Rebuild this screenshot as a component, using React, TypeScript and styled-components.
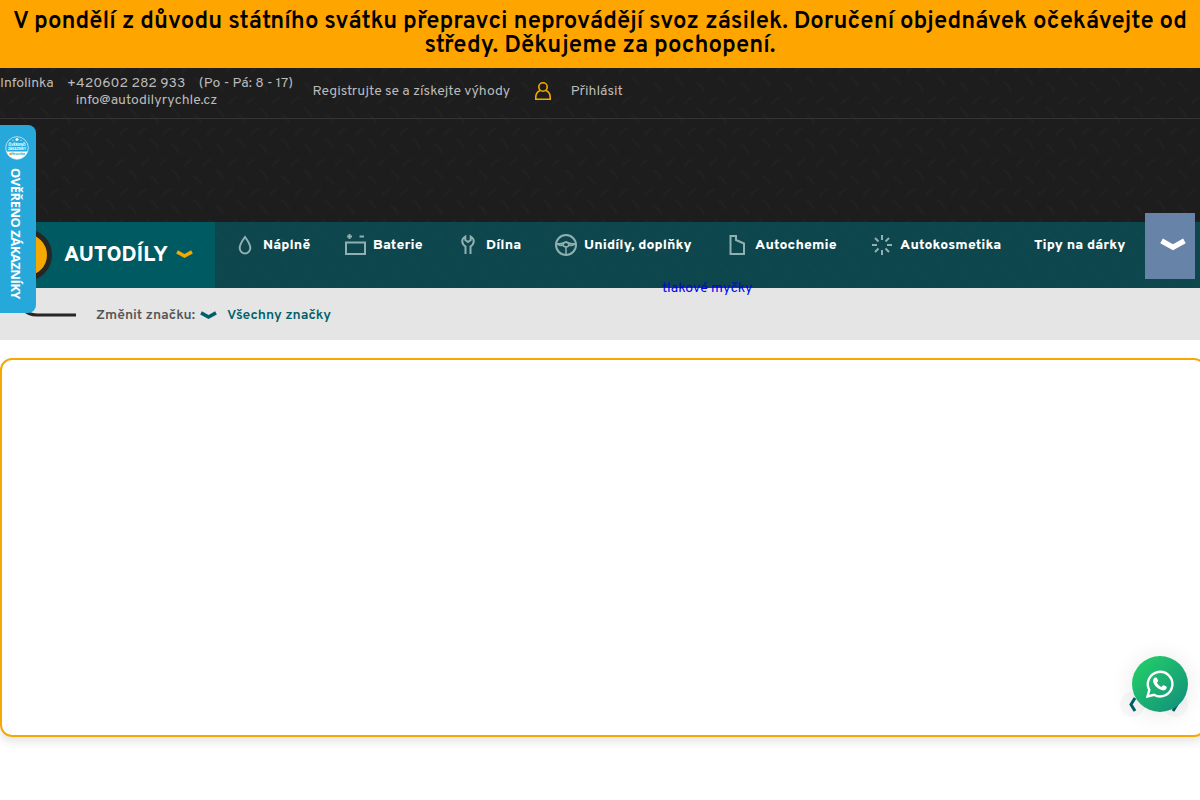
import type { ReactNode } from 'react';
import styled, { createGlobalStyle } from 'styled-components';

const treadPlate = (opacity: number) => `url("data:image/svg+xml,%3Csvg xmlns='http://www.w3.org/2000/svg' width='43.75' height='61.5' viewBox='0 0 43.75 61.5'%3E%3Cg fill='none' stroke='%23fff' stroke-opacity='${opacity}' stroke-width='2.2'%3E%3Cpath d='M1 15q3-5 8-7M19.300 15q3-5 8-7M-3 46q3-5 8-7M40.700 46q3-5 8-7M22.300 46q3-5 8-7M31 19q5 3 8 9M9.300 24q5 3 8 9M9.300 49.500q5 3 8 9M31 55.500q5 3 8 9M31-6q5 3 8 9'/%3E%3C/g%3E%3C/svg%3E")`;

const GlobalStyle = createGlobalStyle`
  * {
    box-sizing: border-box;
  }

  html, body {
    height: 800px;
    overflow: hidden;
  }

  body {
    margin: 0;
    background: #fff;
    font-family: Overpass, Roboto, "Noto Sans", sans-serif;
    font-size: 14px;
  }
`;

const Page = styled.div`
  position: relative;
  width: 1200px;
  height: 800px;
  overflow: hidden;
`;

const Notice = styled.div`
  height: 68px;
  padding: 10px;
  background: #ffa500;
  color: #000;
  font-size: 24px;
  font-weight: 600;
  line-height: 24px;
  text-align: center;
`;

const Header = styled.header`
  height: 154px;
  background: #1d1d1d ${treadPlate(0.016)} 31.25px 52px;
  color: #bbb;
`;

const TopBar = styled.div`
  display: flex;
  height: 51px;
  border-bottom: 1px solid #353334;
  white-space: nowrap;
`;

const Contact = styled.div`
  width: 293px;
  padding-top: 7px;
  line-height: 17px;
`;

const Phone = styled.div`
  display: flex;
  justify-content: space-between;
`;

const Mail = styled.div`
  text-align: center;
`;

const UserLink = styled.a<{ $gap: number }>`
  margin-left: ${({ $gap }) => $gap}px;
  line-height: 47px;
`;

const UserIcon = styled.svg`
  margin: 14px 0 0 24px;
  fill: none;
  stroke: #f5a800;
  stroke-width: 1.6;
`;

const Nav = styled.nav`
  display: flex;
  height: 66px;
  background: #0d464c ${treadPlate(0.008)} 31.25px 21px;
  white-space: nowrap;
`;

const PartsButton = styled.div`
  display: flex;
  align-items: center;
  width: 215px;
  height: 66px;
  background: #005a61;
  color: #fff;
`;

const PartsBadge = styled.div`
  width: 52px;
  height: 52px;
  border: 5px solid #262626;
  border-radius: 50%;
  background: #f5a800;
`;

const PartsLabel = styled.span`
  width: 112px;
  margin-left: 12px;
  font-size: 21px;
  font-weight: 800;
  letter-spacing: 0.15px;
`;

const NavList = styled.div`
  display: flex;
  flex: 1;
  padding: 10px 0 0 17px;
`;

const NavItem = styled.a<{ $width: number }>`
  display: flex;
  align-items: center;
  width: ${({ $width }) => $width}px;
  height: 26px;
  color: #fff;
  font-weight: 800;
  letter-spacing: 0.1px;

  svg {
    flex: none;
    margin-right: 5px;
    fill: none;
    stroke: #91b0b1;
    stroke-width: 2;
  }
`;

const MoreButton = styled.div`
  position: absolute;
  top: 213px;
  right: 5px;
  display: flex;
  align-items: center;
  justify-content: center;
  width: 50px;
  height: 66px;
  padding: 0 0 2px 5px;
  background: #6883a8;
`;

const StrayLink = styled.a`
  position: absolute;
  top: 280px;
  left: 662px;
  color: #0000ee;
  line-height: 17px;
  letter-spacing: 0.05px;
`;

const BrandBar = styled.div`
  display: flex;
  align-items: center;
  height: 52px;
  padding-left: 20px;
  background: #e5e5e5;
  font-weight: 600;
  white-space: nowrap;
`;

const BrandLabel = styled.span`
  width: 104px;
  margin-left: 20px;
  padding-top: 2px;
  color: #555;
  letter-spacing: -0.05px;
`;

const BrandLink = styled.a`
  margin-left: 10px;
  padding-top: 2px;
  color: #005f68;
  letter-spacing: -0.05px;
`;

const BrandChevron = styled.div`
  display: flex;
  padding-top: 3px;
`;

const Banner = styled.section`
  width: 1206px;
  height: 379px;
  margin-top: 18px;
  border: 2px solid #f5a800;
  border-radius: 12px;
  box-shadow: 0 5px 10px rgba(0, 0, 0, 0.1);
`;

const Arrows = styled.div`
  position: absolute;
  top: 692px;
  left: 1120px;
  display: flex;
  gap: 18px;
`;

const Arrow = styled.div`
  display: flex;
  align-items: center;
  justify-content: center;
  width: 25px;
  height: 25px;
  border-radius: 50%;
  background: #f8f8f8;
`;

const ChatButton = styled.div`
  position: absolute;
  top: 656px;
  right: 12px;
  display: flex;
  align-items: center;
  justify-content: center;
  width: 56px;
  height: 56px;
  border-radius: 50%;
  background: linear-gradient(135deg, #25d366, #128c7e);
  box-shadow: 0 2px 24px rgba(0, 0, 0, 0.1);
`;

const Verified = styled.aside`
  position: absolute;
  top: 125px;
  left: 0;
  display: flex;
  flex-direction: column;
  align-items: center;
  width: 36px;
  height: 188px;
  padding: 11px 2px 0 0;
  border-radius: 0 8px 8px 0;
  background: #26a9da;
`;

const VerifiedText = styled.span`
  margin-top: 8px;
  padding-right: 2px;
  color: #fff;
  font-family: "Open Sans", sans-serif;
  font-size: 13px;
  font-weight: 700;
  line-height: 16px;
  letter-spacing: -0.5px;
  white-space: nowrap;
  writing-mode: vertical-rl;
`;

interface ChevronProps {
  color: string;
  width?: number;
}

const Chevron = ({ color, width = 18 }: ChevronProps) => (
  <svg width={width} height={width * 0.55} viewBox="0 0 18 10">
    <path d="M1 2 9 6.500 17 2" fill="none" stroke={color} strokeWidth="3.700" />
  </svg>
);

const icon = (children: ReactNode) => (
  <svg width="26" height="26" viewBox="0 0 26 26">{children}</svg>
);

const navItems = [
  {
    label: 'Náplně', width: 110,
    icon: icon(<path d="M13 5Q7.700 12 7.700 16a5.300 5.500 0 0 0 10.600 0Q18.300 12 13 5Z" />),
  },
  {
    label: 'Baterie', width: 113,
    icon: icon(<path d="M4 10.500h19V22H4ZM7.500 2v5M5 4.500h5M17.500 4.500h4.500" />),
  },
  {
    label: 'Dílna', width: 98,
    icon: icon(<path d="M10.500 22v-7.500Q7.200 12 7.200 9.200 7.200 6.300 10.300 4.500V8l2.700 2 2.700-2V4.500Q18.800 6.300 18.800 9.200 18.800 12 15.500 14.500V22" />),
  },
  {
    label: 'Unidíly, doplňky', width: 171,
    icon: icon(<>
      <circle cx="13" cy="13" r="10" />
      <ellipse cx="13" cy="12.500" rx="3" ry="2.300" strokeWidth="1.600" />
      <path d="M3.500 11.500Q8 12.500 13 10q5 2.500 9.500 1.500M9.800 13Q7 14.500 4 12M16.200 13q2.800 1.500 5.800-1M13 15v8" strokeWidth="1.500" />
    </>),
  },
  {
    label: 'Autochemie', width: 145,
    icon: icon(<path d="M6.500 4H12v4l8 3.500V22H6.500Z" />),
  },
  {
    label: 'Autokosmetika', width: 165,
    icon: icon(<path d="M13 3v5M13 18v5M3 13h5M18 13h5M6 6l3.500 3.500M16.500 16.500 20 20M20 6l-3.500 3.500M9.500 16.500 6 20" />),
  },
  { label: 'Tipy na dárky', width: 100, icon: null },
];

const VerifiedSeal = () => (
  <svg width="24" height="24" viewBox="0 0 24 24">
    <circle cx="12" cy="12" r="11.300" fill="none" stroke="#b5e0f1" />
    <path d="M1.500 15.500h21A11 11 0 0 1 1.500 15.500Z" fill="#fff" />
    <path d="M12 2v3M10.500 3.500h3" stroke="#fff" strokeWidth="1.300" />
    <path d="M4.500 6.500h1M7.500 4.300h1M15.500 4.300h1M18.500 6.500h1" stroke="#fff" />
    <g fill="#fff" fontFamily="Open Sans, sans-serif" fontWeight="700" fontSize="3.6" textAnchor="middle">
      <text x="12" y="10.300">OVĚŘENO</text>
      <text x="12" y="14.200" fontSize="3.2">ZÁKAZNÍKY</text>
      <text x="13" y="19.300" fontSize="3.2" fill="#26a9da">Heureka</text>
    </g>
    <circle cx="5.500" cy="18" r="1.200" fill="#f7941e" />
  </svg>
);

export default function App() {
  return (
    <Page>
      <GlobalStyle />
      <Notice>
        V pondělí z důvodu státního svátku přepravci neprovádějí svoz zásilek. Doručení objednávek očekávejte od
        středy. Děkujeme za pochopení.
      </Notice>

      <Header>
        <TopBar>
          <Contact>
            <Phone>
              <span>Infolinka</span>
              <span>+420602 282 933</span>
              <span>(Po - Pá: 8 - 17)</span>
            </Phone>
            <Mail>info@autodilyrychle.cz</Mail>
          </Contact>
          <UserLink $gap={19.5}>Registrujte se a získejte výhody</UserLink>
          <UserIcon width="18" height="19" viewBox="0 0 18 19">
            <circle cx="9" cy="5" r="4.200" />
            <path d="M6 8.500Q1.800 10.500 1.800 15v2.300h14.400V15q0-4.500-4.200-6.500" />
          </UserIcon>
          <UserLink $gap={18.5}>Přihlásit</UserLink>
        </TopBar>
      </Header>

      <Nav>
        <PartsButton>
          <PartsBadge />
          <PartsLabel>AUTODÍLY</PartsLabel>
          <Chevron color="#f5a800" width={17} />
        </PartsButton>
        <NavList>
          {navItems.map((item) => (
            <NavItem key={item.label} $width={item.width}>
              {item.icon}
              {item.label}
            </NavItem>
          ))}
        </NavList>
      </Nav>

      <BrandBar>
        <svg width="56" height="12" viewBox="0 0 56 12">
          <path d="M3 1q5 6 14 6h39" fill="none" stroke="#262626" strokeWidth="3" />
        </svg>
        <BrandLabel>Změnit značku:</BrandLabel>
        <BrandChevron>
          <Chevron color="#005f68" width={17} />
        </BrandChevron>
        <BrandLink>Všechny značky</BrandLink>
      </BrandBar>

      <Banner />

      <MoreButton>
        <Chevron color="#fff" width={26} />
      </MoreButton>
      <StrayLink>tlakové myčky</StrayLink>

      <Arrows>
        <Arrow>
          <svg width="9" height="15" viewBox="0 0 9 15"><path d="M7 1 3 7.500 7 14" fill="none" stroke="#005f68" strokeWidth="3" /></svg>
        </Arrow>
        <Arrow>
          <svg width="9" height="15" viewBox="0 0 9 15"><path d="m2 1 4 6.500L2 14" fill="none" stroke="#005f68" strokeWidth="3" /></svg>
        </Arrow>
      </Arrows>
      <ChatButton>
        <svg width="28" height="28" viewBox="0 0 28 28">
          <path d="M1.500 26.500 3.300 20A12.300 12.300 0 1 1 8 24.800Z" fill="none" stroke="#fff" strokeWidth="2.400" />
          <path d="M9 7.500h1.200q.6 0 .9.700l1 2.400q.2.500-.2 1l-1 1.200c1 1.900 2.500 3.300 4.700 4.200l1.200-1.500q.4-.5 1-.2l2.400 1.200q.6.300.5.900c-.2 2.200-2 3-3.700 3-3 0-9.500-4.300-10-9.300 0-1.500.9-3.200 2-3.600Z" fill="#fff" />
        </svg>
      </ChatButton>

      <Verified>
        <VerifiedSeal />
        <VerifiedText>OVĚŘENO ZÁKAZNÍKY</VerifiedText>
      </Verified>
    </Page>
  );
}
